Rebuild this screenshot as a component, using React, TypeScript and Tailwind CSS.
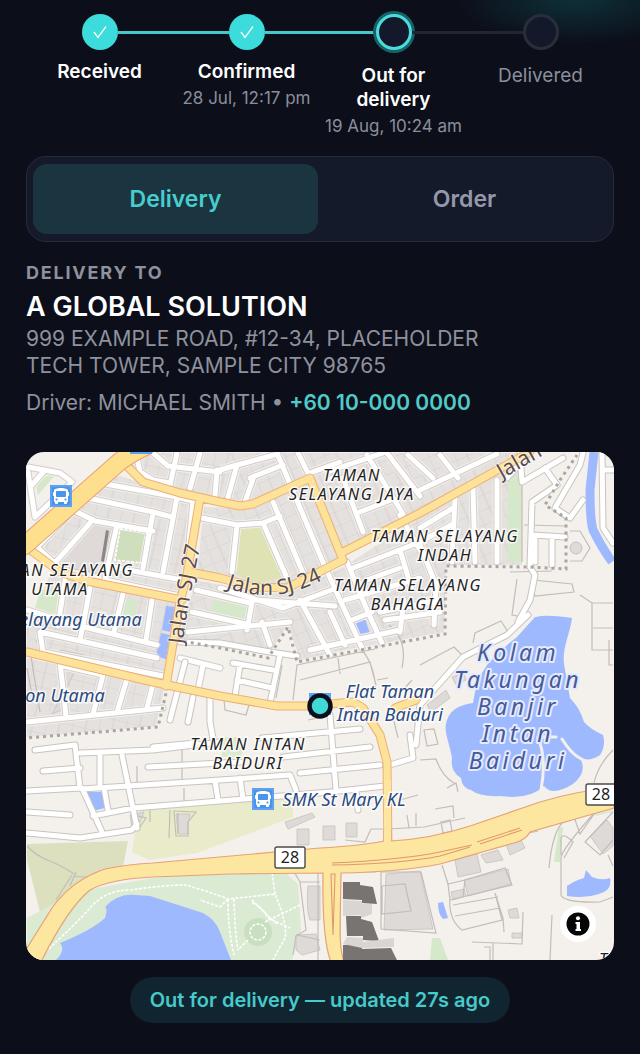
import { useState } from "react";
import { FaBus } from "react-icons/fa";

type StepState = "done" | "active" | "pending";

interface Step {
  label: string;
  time?: string;
  state: StepState;
}

interface PlaceLabel {
  x: number;
  y: number;
  lines: string[];
}

const steps: Step[] = [
  { label: "Received", state: "done" },
  { label: "Confirmed", time: "28 Jul, 12:17 pm", state: "done" },
  { label: "Out for delivery", time: "19 Aug, 10:24 am", state: "active" },
  { label: "Delivered", state: "pending" },
];

// housing estates, hatched so the plots show between the streets
const estatesWest = [
  "M100 482L120 476L197 500L187 575L183 595L103 578L37 548L73 508Z",
  "M50 574L87 584L178 604L168 680L27 648V620L40 600Z",
  "M27 658L164 688L156 726L27 737Z",
  "M132 453H232L228 500L143 482L124 464Z",
];
const estatesEast = [
  "M204 507L232 508L255 508L308 482L343 556L320 572L287 584L253 582L197 573Z",
  "M232 453H530L420 508L343 548L310 474L252 502L224 499Z",
  "M196 580L253 592L287 594L343 567L420 518L522 462V565H446L444 632L345 650L300 660L288 624L268 655L178 640Z",
];

const greens = [
  { d: "M120 529L147 532L143 563L115 560Z", fill: "#cfdfbd" },
  { d: "M239 528L262 527L286 577L253 584L235 573Z", fill: "#dfe3b4" },
  { d: "M508 480L521 473V562H508Z", fill: "#d5e8c9" },
  { d: "M34 478L56 474L38 495Z", fill: "#d5e8c9" },
  { d: "M40 590L68 590L62 618L34 612Z", fill: "#d5e8c9" },
  { d: "M123 598L138 600L135 620H119Z", fill: "#d5e8c9" },
  { d: "M213 600L250 606L247 628L210 622Z", fill: "#d5e8c9" },
  { d: "M27 844L128 841L123 867L78 885L42 920L27 860Z", fill: "#dce0bf" },
  { d: "M138 812L170 804L293 792V817L197 853L150 860L132 852Z", fill: "#e9ebca" },
  { d: "M222 737H242V757H222Z", fill: "#dfe9cf" },
  { d: "M27 918L60 900L97 888L153 878L280 868L298 884L301 930L292 960H27Z", fill: "#dbead3" },
  { d: "M432 938H440L448 960H430Z", fill: "#d5e8c9" },
  { d: "M559 828L563 827L560 862L554 862Z", fill: "#d5e8c9" },
  { d: "M590 808L613 803V812L596 816Z", fill: "#dfe9cf" },
];

const waters = [
  "M535 617Q545 615 572 618C570 634 562 648 564 664L570 698Q580 708 584 722Q590 729 603 735Q606 746 600 755Q590 762 580 758Q588 772 573 784Q552 797 544 786Q530 800 500 796Q480 797 471 790Q462 788 461 778Q450 772 452 758C450 745 444 732 446 724Q449 706 473 703Q476 680 487 665Q500 650 517 637Z",
  "M60 943Q92 930 105 918Q108 908 105 907Q118 893 135 895L150 896L203 913Q216 920 220 932L231 960H56Q66 950 60 943Z",
  "M567 886Q576 880 584 878L586 870L592 877Q602 881 610 878Q612 888 604 892Q588 899 567 896Z",
  "M438 903L443 902L448 918L443 919Q438 914 438 903Z",
  "M166 606L176 607L170 632L162 630ZM161 633L170 635L166 659L156 656Z",
  "M353 615L360 612L365 619L371 636L362 641Z",
  "M87 792L102 792L105 808L93 811Z",
  "M536 617Q545 614 572 618L566 640L520 634Z",
];

const parcels = [
  "M293 700L297 665L375 649M300 680L370 662L376 685M338 658L340 674M362 650Q374 664 376 690",
  "M389 625Q408 640 402 668M377 680L388 678M403 690L412 680M393 717L398 738",
  "M224 700L225 710L246 715L249 705M282 665L276 698M308 720L318 718",
  "M473 643L475 633L501 621L508 632M420 665L454 647L463 656",
  "M517 579L512 615L523 617M533 580L572 584L574 592L535 596L531 582M510 572L552 571",
  "M570 531L580 531L590 548L582 561L570 561M524 525L565 526M522 485V562",
  "M580 595L592 603H613M592 603V650H613M593 628H613M609 640V665H613",
  "M420 760L436 759Q442 776 454 783M594 783Q598 765 613 750M424 730L434 729L438 744L427 746Z",
  "M30 650L40 712M36 640L46 660M27 668L33 700M182 742L182 780M137 766V782M184 788V802M150 808V822",
  "M27 846Q36 856 50 861Q66 868 74 874M72 875L56 900M74 876Q90 880 123 868M76 872L70 886",
  "M173 811L196 812L188 822V836L176 836L174 812M178 813V833M170 810L169 838M133 815L146 818L138 830",
  "M345 840L365 842L371 829H383M388 829L424 827L465 818M407 815L409 828M416 813V826M435 809L453 806L454 818M441 822L443 833L452 831L450 820Z",
  "M381 872H421L436 933L381 929ZM382 886L405 884L411 911L382 914Z",
  "M442 865L448 884L465 880M448 884L450 900L512 885L505 868L465 880L463 896M450 896Q448 920 462 930L502 920L495 893M453 905L498 897M455 916L500 908M495 893L503 918L504 932",
  "M472 942L522 944L523 912M493 943V960M552 915L550 960M484 947H490V960",
  "M549 868Q552 835 562 823L592 812Q600 805 597 800M573 814L580 834L597 810M597 810Q561 850 561 858V895Q564 903 600 902L613 897",
  "M561 855V838Q563 832 573 842L564 858M613 812L585 842L600 855L613 840M608 855L613 866",
  "M520 835L538 831M400 800L418 795M447 788L456 783L458 792M343 872H376M340 960V872",
  "M293 870L300 882H320M300 882L306 930L296 936L293 955M297 935L320 940M318 872V960",
];

const buildings = [
  "M386 874L420 871L433 929L384 930Z",
  "M455 860L477 854L481 872L458 877Z",
  "M464 880L508 869L511 884L468 896Z",
  "M451 892L464 889L466 896L453 900Z",
  "M481 855L498 850L503 860L486 863Z",
  "M506 844L521 840L525 848L510 855Z",
  "M590 836L607 820L613 828V846L603 854Z",
  "M308 886H320V920H310Q306 910 308 886Z",
  "M296 935L316 934L320 950L302 955L296 950Z",
  "M285 822L312 813L315 817L288 829ZM297 829H309V845H297Z",
  "M323 826H335V840H323ZM346 823H357V837H346Z",
  "M508 910L517 908L519 918L510 918ZM512 933H522V938H512Z",
  "M452 677L464 673L466 680L456 685ZM427 705L446 690L450 698L431 712Z",
  "M84 655L60 650L66 708L52 714Z",
  "M130 815L144 812L140 822L132 828ZM176 814L190 814L188 824V834L178 834Z",
];

// residential streets
const streets = [
  "M186 576L193 501L177 497L100 483L37 547L60 568",
  "M88 498L153 512L172 517M73 510L95 521L153 531M117 525L105 579M90 523L53 565",
  "M153 513L143 568M177 497L163 572M112 567L182 580M105 580L180 596",
  "M28 467L60 473L72 482L35 517L28 472M45 470L32 485M73 508L62 498",
  "M137 458L140 472L153 480L170 483M153 453L168 466L220 472M177 453L170 485M200 453L190 488M217 470L215 496",
  "M202 518L237 525L263 523L280 516M220 470L237 465L278 454M237 465L228 497M254 476L245 502M250 478L283 465",
  "M277 453L325 567L362 648M298 453L310 477M273 502L303 573M330 471L383 453M330 480L338 474",
  "M343 478L363 532M367 455L403 514M387 453L420 496M360 512L393 499M310 473L340 462",
  "M237 525L232 572M263 523L287 578M347 562L367 610L382 643M220 588L283 608L337 588M252 602L247 630",
  "M353 568L420 542L453 524M367 580L400 568M380 612L440 600M420 545L436 585L434 625M400 550L412 590",
  "M420 490L497 454M408 455L433 478M420 528L453 508M455 498L452 562M473 488L475 562M497 480L497 562",
  "M400 515L420 550M440 455L458 478M385 620L440 612M345 600L420 578M352 620L372 612",
  "M90 588L84 620L80 640M123 594L114 632M152 600L146 640M65 580L58 626M196 590L250 603M192 612L246 624M188 632L290 622",
  "M256 600L335 606M262 622L270 645M300 600L330 655M310 650L400 630M330 612L345 645M404 600L400 632",
  "M40 632L157 658M43 652L163 676M40 632L43 652M80 626L157 645M27 610L78 626",
  "M60 662L66 716M103 675L93 714M127 679L117 712M153 684L147 708M27 722L163 708M64 666L103 675",
  "M180 658L220 668M203 665L198 690",
];

// quieter lanes outside the estates
const lanes = [
  "M185 662L170 720M193 697L188 722M210 698V722L214 744",
  "M35 750L75 745L80 788M80 753L153 750L220 742M43 771L80 768M100 755V788M122 755L137 828M148 767L240 762M153 747L196 743",
  "M27 791L82 788L102 832M27 812L70 815M27 833L80 838L132 830L137 824M104 788L108 810M93 816L133 808L220 801L330 792",
  "M82 789L128 786L220 780L290 775L296 790M215 781L218 800M240 778L243 799",
  "M233 663L273 670M240 665L235 696M237 680L272 688M280 655L270 703M180 642L220 643L270 652L297 656",
  "M330 715L336 790M262 738L360 729M283 757L370 747M300 773L380 765M390 765L413 758L410 735M356 790L358 810M330 792L385 786",
  "M530 452L507 478M520 453L522 482L563 458M545 468L557 485L532 502L530 567L535 575L530 600L518 622",
  "M583 453L580 465L555 508L570 518L583 500M533 535L565 537M552 538V565M535 538V562M602 453L603 528L613 543M603 470H613",
  "M528 615L507 635L463 657L420 705L416 745",
];

const avenues = [
  "M123 462L143 482L180 493L220 502L240 506L253 504L310 478L343 560L287 588L253 587L220 578L190 572",
  "M343 552L420 513L530 452",
  "M200 498L187 575L180 602L166 686",
  "M33 552L60 572L87 581L182 600",
  "M27 652L153 682L220 696L277 706L307 706L353 702L363 708L380 735L387 762L388 850",
  "M395 708L416 700",
];

const boundaries = [
  "M177 640L220 648L268 658L288 627L297 662L445 634L446 566L530 567L566 569L566 518L545 505L560 480L577 455",
  "M174 645L168 685L158 727L27 738",
];

const footpaths = [
  "M42 955Q75 925 90 908Q105 890 130 890Q165 885 185 885Q205 890 228 899L275 894Q288 925 285 938L273 960",
  "M228 899Q228 930 234 955M234 899Q235 935 238 950M228 899L220 907L200 900M275 894L272 872M252 900L262 910L278 925M265 922L300 905",
  "M252 903Q262 906 268 918L290 928M248 940L238 950",
];

const estateNames: PlaceLabel[] = [
  { x: 352, y: 481, lines: ["TAMAN", "SELAYANG JAYA"] },
  { x: 445, y: 542, lines: ["TAMAN SELAYANG", "INDAH"] },
  { x: 408, y: 591, lines: ["TAMAN SELAYANG", "BAHAGIA"] },
  { x: 60, y: 576, lines: ["TAMAN SELAYANG", "UTAMA"] },
  { x: 248, y: 750, lines: ["TAMAN INTAN", "BAIDURI"] },
  { x: 628, y: 965, lines: ["TAMAN"] },
];

const stopNames: PlaceLabel[] = [
  { x: 390, y: 698, lines: ["Flat Taman", "Intan Baiduri"] },
  { x: 344, y: 806, lines: ["SMK St Mary KL"] },
  { x: 76, y: 626, lines: ["Selayang Utama"] },
  { x: 45, y: 702, lines: ["Simpon Utama"] },
];

const lakeName = ["Kolam", "Takungan", "Banjir", "Intan", "Baiduri"];

function BusStop({ x, y }: { x: number; y: number }) {
  return (
    <g>
      <rect x={x - 11} y={y - 11} width={22} height={22} fill="#4a94ee" />
      <rect x={x - 10} y={y - 10} width={20} height={20} fill="none" stroke="#6fb0f8" />
      <FaBus x={x - 8} y={y - 8} size={16} color="#ffffff" />
    </g>
  );
}

function RouteShield({ x, y }: { x: number; y: number }) {
  return (
    <g>
      <rect x={x - 15} y={y - 10} width={30} height={21} rx={2} fill="#ffffff" stroke="#4b4b4b" strokeWidth={1.4} />
      <text x={x} y={y + 6} textAnchor="middle" className="fill-[#222222] text-base">
        28
      </text>
    </g>
  );
}

function Roads({ paths, casing, fill, width }: { paths: string[]; casing: string; fill: string; width: number }) {
  const d = paths.join("");
  return (
    <g fill="none" strokeLinecap="round" strokeLinejoin="round">
      <path d={d} stroke={casing} strokeWidth={width + 2} />
      <path d={d} stroke={fill} strokeWidth={width} />
    </g>
  );
}

function DeliveryMap() {
  return (
    <svg
      viewBox="26 452 588 508"
      className="block h-auto w-full font-['Noto_Sans',sans-serif]"
      role="img"
      aria-labelledby="map-address"
    >
      <defs>
        <pattern id="plots-west" width="26" height="15" patternUnits="userSpaceOnUse" patternTransform="rotate(13)">
          <rect width="26" height="15" fill="#e5e1de" />
          <path d="M0 0H26M0 0V15M13 0V15" stroke="#d3cdca" strokeWidth="0.8" fill="none" />
        </pattern>
        <pattern id="plots-east" width="24" height="14" patternUnits="userSpaceOnUse" patternTransform="rotate(-23)">
          <rect width="24" height="14" fill="#e5e1de" />
          <path d="M0 0H24M0 0V14M12 0V14" stroke="#d3cdca" strokeWidth="0.8" fill="none" />
        </pattern>
        <path id="sj24" d="M226 588Q250 596 272 595Q298 594 330 576" />
        <path id="sj27" d="M183 644Q188 600 203 534" />
      </defs>

      <rect x="26" y="452" width="588" height="508" fill="#f4f0ec" />
      <path d={estatesWest.join("")} fill="url(#plots-west)" />
      <path d={estatesEast.join("")} fill="url(#plots-east)" />
      {greens.map((g) => (
        <path key={g.d} d={g.d} fill={g.fill} />
      ))}
      <path d="M90 524L112 528L101 574L57 566Z" fill="#dfdad8" stroke="#c9c3c0" />
      <path d="M106 530L109 531L104 562L101 561Z" fill="#8a8785" />
      <circle cx="258" cy="932" r="14" fill="#c8dfc0" />
      <path d={waters.join("")} fill="#9fb9ff" />
      <path d="M594 452L590 490Q590 520 593 530Q602 548 612 562" fill="none" stroke="#9fb9ff" strokeWidth="9" />
      <path
        d="M562 739Q570 752 578 757L590 764M538 738Q547 758 541 790M538 737H556"
        fill="none"
        stroke="#f4f0ec"
        strokeWidth="3"
        strokeLinecap="round"
      />
      <path d={buildings.join("")} fill="#dedad7" stroke="#c6c0bd" strokeWidth="0.8" />
      <circle cx="576" cy="548" r="6" fill="#dedad7" stroke="#c6c0bd" />
      <path d={parcels.join("")} fill="none" stroke="#c3bdb9" strokeWidth="1.2" />

      <path d={streets.join("")} fill="none" stroke="#f3efec" strokeWidth="9" />
      <Roads paths={streets} casing="#d3cdca" fill="#ffffff" width={5} />
      <Roads paths={lanes} casing="#c9c4c0" fill="#ffffff" width={5} />
      <path d={boundaries.join("")} fill="none" stroke="#aaa5a2" strokeWidth="3" strokeDasharray="3 4" />
      <g fill="none" stroke="#ffffff" strokeWidth="1.6" strokeDasharray="3 1.5">
        <path d={footpaths.join("")} />
        <circle cx="258" cy="932" r="8" />
        <path d="M120 529L147 532L143 563L115 560Z" />
      </g>

      <Roads paths={avenues} casing="#efb072" fill="#fde29a" width={7} />
      <Roads paths={["M24 546L118 463Q126 456 146 446"]} casing="#e9a274" fill="#fddf8e" width={17} />
      <path
        d="M27 948L52 908Q72 880 105 869Q130 864 153 863L320 848Q360 846 384 841L384 830H391V841Q430 839 470 826L540 802Q580 790 614 788V808L530 832Q526 840 514 843L440 864Q400 872 341 873L340 930Q340 950 344 962H331Q322 940 323 873L230 874L153 877Q110 879 90 890Q68 908 42 960L24 970Z"
        fill="#fde6a0"
        stroke="#e6a274"
        strokeWidth="1.2"
      />
      <path d="M384 780H391V845H384Z" fill="#fde6a0" />
      <path
        d="M332 863Q400 860 440 852L472 845M332 865Q400 864 440 856L470 847M477 842L520 828M480 844L522 830M331 874L333 935L335 874Z"
        fill="none"
        stroke="#e0986c"
        strokeWidth="1.1"
      />

      <path
        d="M343 882H360V885L373 887L377 904L362 903V900L343 899ZM346 916H361V919L372 922L379 941L363 940V936H347ZM343 945L362 944V949L391 948L397 960H343Z"
        fill="#777472"
      />
      <path
        d="M343 900L362 901V904H372V914L361 918V915L343 916ZM347 937L363 938V942L394 938V947L362 948L343 944Z"
        fill="#d8d5d2"
      />

      <BusStop x={141} y={443} />
      <BusStop x={61} y={496} />
      <BusStop x={263} y={799} />
      <BusStop x={320} y={704} />
      <RouteShield x={290} y={857} />
      <RouteShield x={601} y={794} />

      <g className="fill-[#5a4d4b] text-[21px]" stroke="#ffffff" strokeOpacity="0.6" strokeWidth="2" paintOrder="stroke">
        <text>
          <textPath href="#sj24">Jalan SJ 24</textPath>
        </text>
        <text>
          <textPath href="#sj27">Jalan SJ 27</textPath>
        </text>
        <text transform="translate(502 479) rotate(-30)">Jalan SJ 24</text>
      </g>
      <g
        className="fill-[#222222] text-base tracking-widest italic"
        stroke="#ffffff"
        strokeOpacity="0.8"
        strokeWidth="3"
        paintOrder="stroke"
        textAnchor="middle"
      >
        {estateNames.map((p) => (
          <text key={`${p.x}-${p.y}`}>
            {p.lines.map((line, i) => (
              <tspan key={line} x={p.x} y={p.y + i * 19}>
                {line}
              </tspan>
            ))}
          </text>
        ))}
      </g>
      <g
        className="fill-[#2a4a80] text-[18px] italic"
        stroke="#ffffff"
        strokeOpacity="0.8"
        strokeWidth="3"
        paintOrder="stroke"
        textAnchor="middle"
      >
        {stopNames.map((p) => (
          <text key={`${p.x}-${p.y}`}>
            {p.lines.map((line, i) => (
              <tspan key={line} x={p.x} y={p.y + i * 23}>
                {line}
              </tspan>
            ))}
          </text>
        ))}
      </g>
      <text
        className="fill-[#465a96] text-[23px] tracking-[0.15em] italic"
        stroke="#e4eaff"
        strokeWidth="4"
        strokeLinejoin="round"
        paintOrder="stroke"
        textAnchor="middle"
      >
        {lakeName.map((line, i) => (
          <tspan key={line} x={518} y={661 + i * 27}>
            {line}
          </tspan>
        ))}
      </text>

      <circle cx="320" cy="706" r="10.5" fill="#40d9d6" stroke="#0c101d" strokeWidth="4.5" />
    </svg>
  );
}

function StepDot({ state }: { state: StepState }) {
  if (state === "done") {
    return (
      <span className="flex size-9 flex-none items-center justify-center rounded-full bg-[#3bdcdb]">
        <svg viewBox="0 0 14 14" className="size-3.5" fill="none" stroke="#ffffff" strokeWidth="1.3">
          <path d="M1 7L5 12.5L13 1.5" />
        </svg>
      </span>
    );
  }
  if (state === "active") {
    return (
      <span className="size-9 flex-none rounded-full border-3 border-[#4adcdc] bg-[#13182b] ring-3 ring-[#1a6165]" />
    );
  }
  return <span className="size-9 flex-none rounded-full border-3 border-[#2a2d3a] bg-[#13182b]" />;
}

function Progress() {
  return (
    <ol className="grid grid-cols-4">
      {steps.map((step, i) => {
        const reached = step.state !== "pending";
        const next = steps[i + 1];
        return (
          <li key={step.label} className="flex flex-col items-center text-center">
            <div className="flex w-full items-center">
              <span className={`h-[3px] flex-1 ${i === 0 ? "" : reached ? "bg-[#45c8c9]" : "bg-[#232632]"}`} />
              <StepDot state={step.state} />
              <span
                className={`h-[3px] flex-1 ${!next ? "" : next.state !== "pending" ? "bg-[#45c8c9]" : "bg-[#232632]"}`}
              />
            </div>
            <p
              className={`max-w-28 px-1 text-[19px] leading-6 ${
                step.state === "done" ? "mt-2.5" : "mt-3.5"
              } ${reached ? "font-semibold text-white" : "text-[#8b8e9b]"}`}
            >
              {step.label}
            </p>
            {step.time && (
              <p className="mt-1 text-[17px] leading-5 whitespace-nowrap text-[#8b8e9b]">{step.time}</p>
            )}
          </li>
        );
      })}
    </ol>
  );
}

export default function App() {
  const [tab, setTab] = useState("Delivery");

  return (
    <main className="min-h-screen bg-[#0c0f1a] bg-[radial-gradient(ellipse_120px_44px_at_90%_0,#0e3038,transparent)] px-[26px] pt-3.5 pb-[31px] font-['Inter',sans-serif]">
      <Progress />

      <div
        role="tablist"
        className="mt-5 grid grid-cols-2 gap-1 rounded-[20px] border border-[#282c3a] bg-[#151a2a] px-1.5 py-[7px]"
      >
        {["Delivery", "Order"].map((name) => (
          <button
            key={name}
            type="button"
            role="tab"
            aria-selected={tab === name}
            onClick={() => setTab(name)}
            className={`h-[70px] rounded-[14px] text-[23px] font-semibold ${
              tab === name ? "bg-[#1b3540] text-[#48cdce]" : "text-[#9499aa]"
            }`}
          >
            {name}
          </button>
        ))}
      </div>

      <section className="mt-[19px] text-[21px] leading-[27px] text-[#8f919d]">
        <h2 className="text-[18px] leading-6 font-bold tracking-widest uppercase">Delivery to</h2>
        <p className="mt-1 text-[27px] leading-9 font-semibold text-white">A GLOBAL SOLUTION</p>
        <p id="map-address" className="max-w-[480px]">
          999 EXAMPLE ROAD, #12-34, PLACEHOLDER TECH TOWER, SAMPLE CITY 98765
        </p>
        <p className="mt-2.5">
          Driver: MICHAEL SMITH •{" "}
          <a href="tel:+60100000000" className="font-semibold text-[#50cbc8]">
            +60 10-000 0000
          </a>
        </p>
      </section>

      <div className="relative mt-9 overflow-hidden rounded-[18px]">
        <DeliveryMap />
        <button
          type="button"
          aria-label="Map attribution"
          className="absolute right-[18px] bottom-[18px] flex size-9 items-center justify-center rounded-full bg-white"
        >
          <svg viewBox="0 0 24 24" className="size-6">
            <circle cx="12" cy="12" r="11.5" fill="#050505" />
            <circle cx="12" cy="6.3" r="2" fill="#ffffff" />
            <path d="M9.5 10H14V17H15V19H9.5V17H10.5V12H9.5Z" fill="#ffffff" />
          </svg>
        </button>
      </div>

      <div className="mt-[17px] flex justify-center">
        <p className="rounded-full bg-[#10252f] px-5 py-[11px] text-xl leading-6 font-semibold text-[#48c9ca]">
          Out for delivery — updated 27s ago
        </p>
      </div>
    </main>
  );
}
